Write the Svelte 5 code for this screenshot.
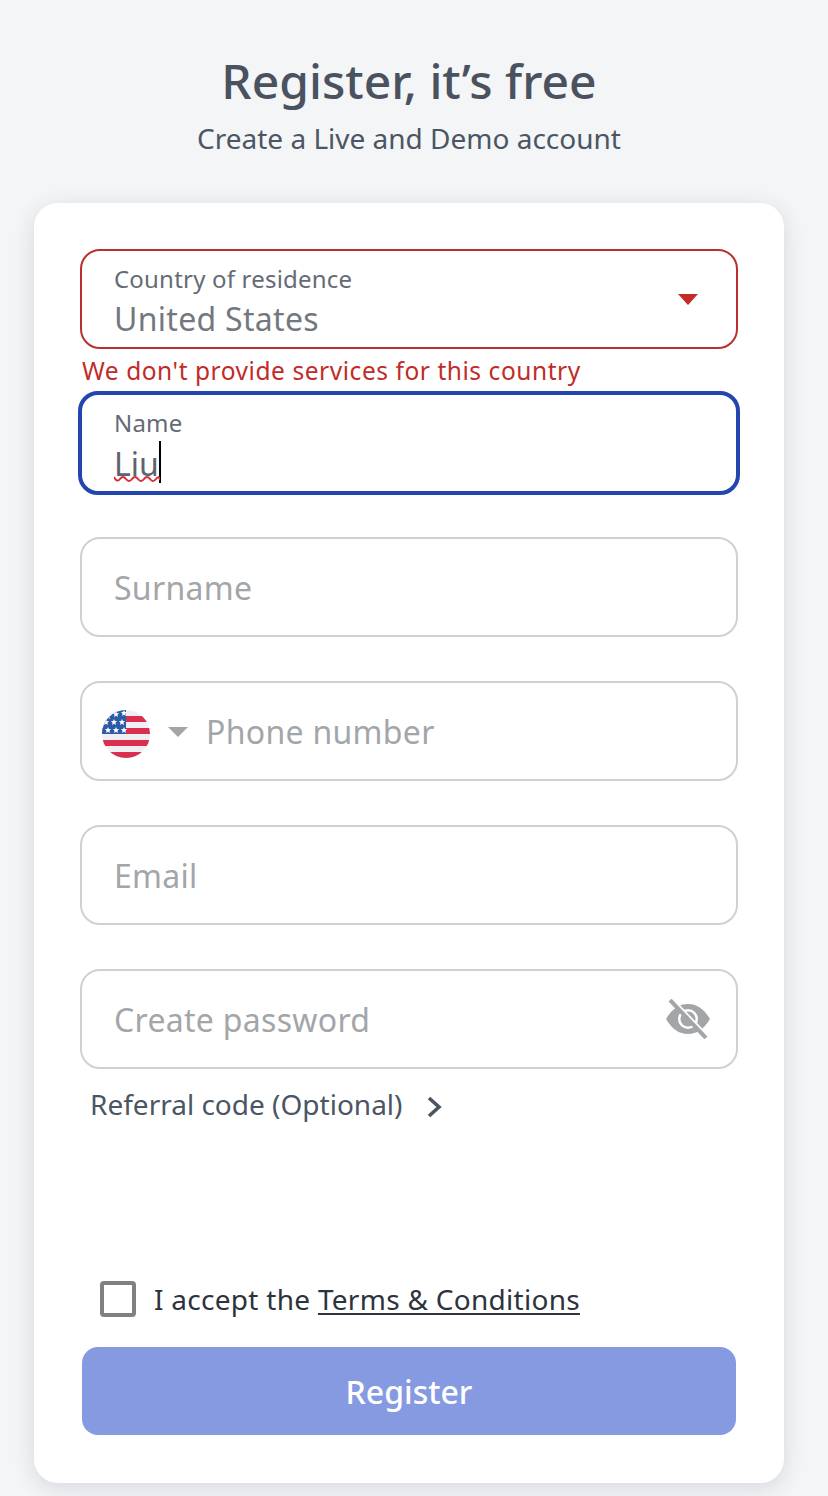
<script lang="ts">
  // registration form, error state on country
  const stars = [
    [108, 716], [116, 714], [124, 713],
    [106, 722], [114, 722], [122, 722],
    [108, 730], [116, 730], [124, 730]
  ]
</script>

<main>
  <header>
    <h1>Register, it’s free</h1>
    <p class="sub">Create a Live and Demo account</p>
  </header>

  <form class="card">
    <div class="field error has-label">
      <div class="value">
        <span class="label">Country of residence</span>
        <span class="text">United States</span>
      </div>
      <svg class="caret-down" width="20" height="11" viewBox="0 0 20 11"><path d="M0 0h20L10 11z" fill="#c62a26" /></svg>
    </div>
    <p class="err">We don't provide services for this country</p>

    <div class="field focus has-label">
      <div class="value">
        <span class="label">Name</span>
        <span class="text typed">
          <span class="typo">Liu</span><i class="cursor"></i>
          <svg class="squiggle" width="46" height="8" viewBox="0 0 46 8"><path d="M0 2Q3 8 6 4T12 4T18 4T24 4T30 4T36 4T42 4T46 5" fill="none" stroke="#d92b3a" stroke-width="2" /></svg>
        </span>
      </div>
    </div>

    <div class="field gap"><span class="ph">Surname</span></div>

    <div class="field gap phone">
      <svg class="flag" width="48" height="48" viewBox="102 710 48 48">
        <defs><clipPath id="round"><circle cx="126" cy="734" r="24" /></clipPath></defs>
        <g clip-path="url(#round)">
          <rect x="102" y="710" width="48" height="48" fill="#f0f0f4" />
          <rect x="102" y="716" width="48" height="6" fill="#d9304f" />
          <rect x="102" y="728" width="48" height="6" fill="#d9304f" />
          <rect x="102" y="740" width="48" height="6" fill="#d9304f" />
          <rect x="102" y="752" width="48" height="6" fill="#d9304f" />
          <rect x="102" y="710" width="24" height="24" fill="#2c5ba8" />
          {#each stars as [x, y]}
            <path d="M{x} {y - 3}l.9 2.1 2.2.2-1.7 1.4.6 2.2-2-1.2-2 1.2.6-2.2-1.7-1.4 2.2-.2z" fill="#fff" />
          {/each}
        </g>
      </svg>
      <svg class="tri" width="20" height="10" viewBox="0 0 20 10"><path d="M0 0h20L10 10z" fill="#a3a6a9" /></svg>
      <span class="ph">Phone number</span>
    </div>

    <div class="field gap"><span class="ph">Email</span></div>

    <div class="field gap pw">
      <span class="ph">Create password</span>
      <svg class="eye" width="46" height="40" viewBox="0 0 46 40">
        <path fill-rule="evenodd" fill="#a3a6a9" d="M1 20C7 10 14 5 23 5s16 5 22 15c-6 10-13 15-22 15S7 30 1 20zm22-10a10 10 0 1 0 0 20 10 10 0 0 0 0-20z" />
        <circle cx="23" cy="20" r="7.5" fill="#a3a6a9" />
        <path d="M6.500 0l36 38" stroke="#fff" stroke-width="4" />
        <path d="M5 1l36 38" stroke="#a3a6a9" stroke-width="4" />
      </svg>
    </div>

    <button type="button" class="referral">
      <span>Referral code (Optional)</span>
      <svg width="16" height="24" viewBox="0 0 16 24"><path d="M3 3l10 9-10 9" fill="none" stroke="#4b5563" stroke-width="3.6" /></svg>
    </button>

    <label class="accept">
      <span class="box"></span>
      <span>I accept the <u>Terms &amp; Conditions</u></span>
    </label>

    <button type="button" class="submit">Register</button>
  </form>
</main>

<style>
  :global(body) { margin: 0; background: #f3f5f7; }
  main { font-family: "Noto Sans", sans-serif; height: 1496px; box-sizing: border-box; padding-top: 51px; overflow: hidden; color: #4b5563; }
  header { text-align: center; width: 750px; height: 152px; margin-left: 34px; }
  h1 { margin: 0; font-size: 48px; line-height: 60px; font-weight: 500; color: #4a5260; }
  .sub { margin: 4px 0 0; font-size: 28px; line-height: 46px; color: #4b5563; }

  .card { width: 750px; height: 1280px; margin: 0 0 0 34px; box-sizing: border-box; padding: 46px 46px 48px; background: #fff; border-radius: 24px; box-shadow: 0 5px 22px rgba(40, 50, 70, .14); display: flex; flex-direction: column; }

  .field { height: 100px; box-sizing: border-box; border: 2px solid #cfd1d3; border-radius: 20px; padding: 0 25px 0 32px; display: flex; align-items: center; position: relative; flex: none; }
  .gap { margin-top: 44px; }
  .has-label { align-items: flex-start; }
  .value { display: flex; flex-direction: column; }
  .label { font-size: 24px; line-height: 34px; letter-spacing: .2px; color: #646b75; margin-top: 11px; }
  .text { font-size: 32px; line-height: 44px; letter-spacing: .3px; color: #73787f; margin-top: 1px; }
  .typed { color: #5c6470; position: relative; letter-spacing: 0; }
  .cursor { position: absolute; top: -1px; width: 2px; height: 42px; background: #000; }
  .squiggle { position: absolute; left: 0; top: 33px; }
  .ph { font-size: 32px; letter-spacing: .3px; color: #a3a6a9; }

  .error { border-color: #b8312f; }
  .caret-down { position: absolute; right: 38px; top: 43px; }
  .err { margin: 0; height: 44px; font-size: 24.5px; line-height: 44px; padding-left: 2px; color: #c02c28; letter-spacing: .55px; flex: none; }
  .focus { border: 4px solid #2345ae; margin: -2px -2px -2px; height: 104px; padding-left: 32px; }
  .focus .label { margin-top: 11px; }
  .focus .text { margin-top: 2px; }

  .phone { padding-left: 20px; }
  .flag { flex: none; margin-top: 6px; }
  .tri { flex: none; margin: 2px 0 0 18px; }
  .phone .ph { margin-left: 18px; }
  .pw { justify-content: space-between; }

  .referral { all: unset; display: flex; align-items: center; gap: 24px; margin: 13px 0 0 10px; font-size: 28px; line-height: 44px; color: #4b5563; font-family: inherit; flex: none; }
  .referral svg { margin-top: 6px; }

  .accept { display: flex; align-items: center; gap: 18px; margin: 153px 0 0 20px; font-size: 28px; line-height: 40px; letter-spacing: .28px; color: #2d333c; flex: none; }
  .box { width: 36px; height: 36px; box-sizing: border-box; border: 4px solid #808080; border-radius: 4px; flex: none; }
  .accept u { text-underline-offset: 3px; text-decoration-thickness: 2px; }

  .submit { all: unset; box-sizing: border-box; height: 88px; margin: 28px 2px 0; background: #869ae2; border-radius: 16px; color: #fff; font-family: inherit; font-size: 32px; font-weight: 500; text-align: center; flex: none; }
</style>
